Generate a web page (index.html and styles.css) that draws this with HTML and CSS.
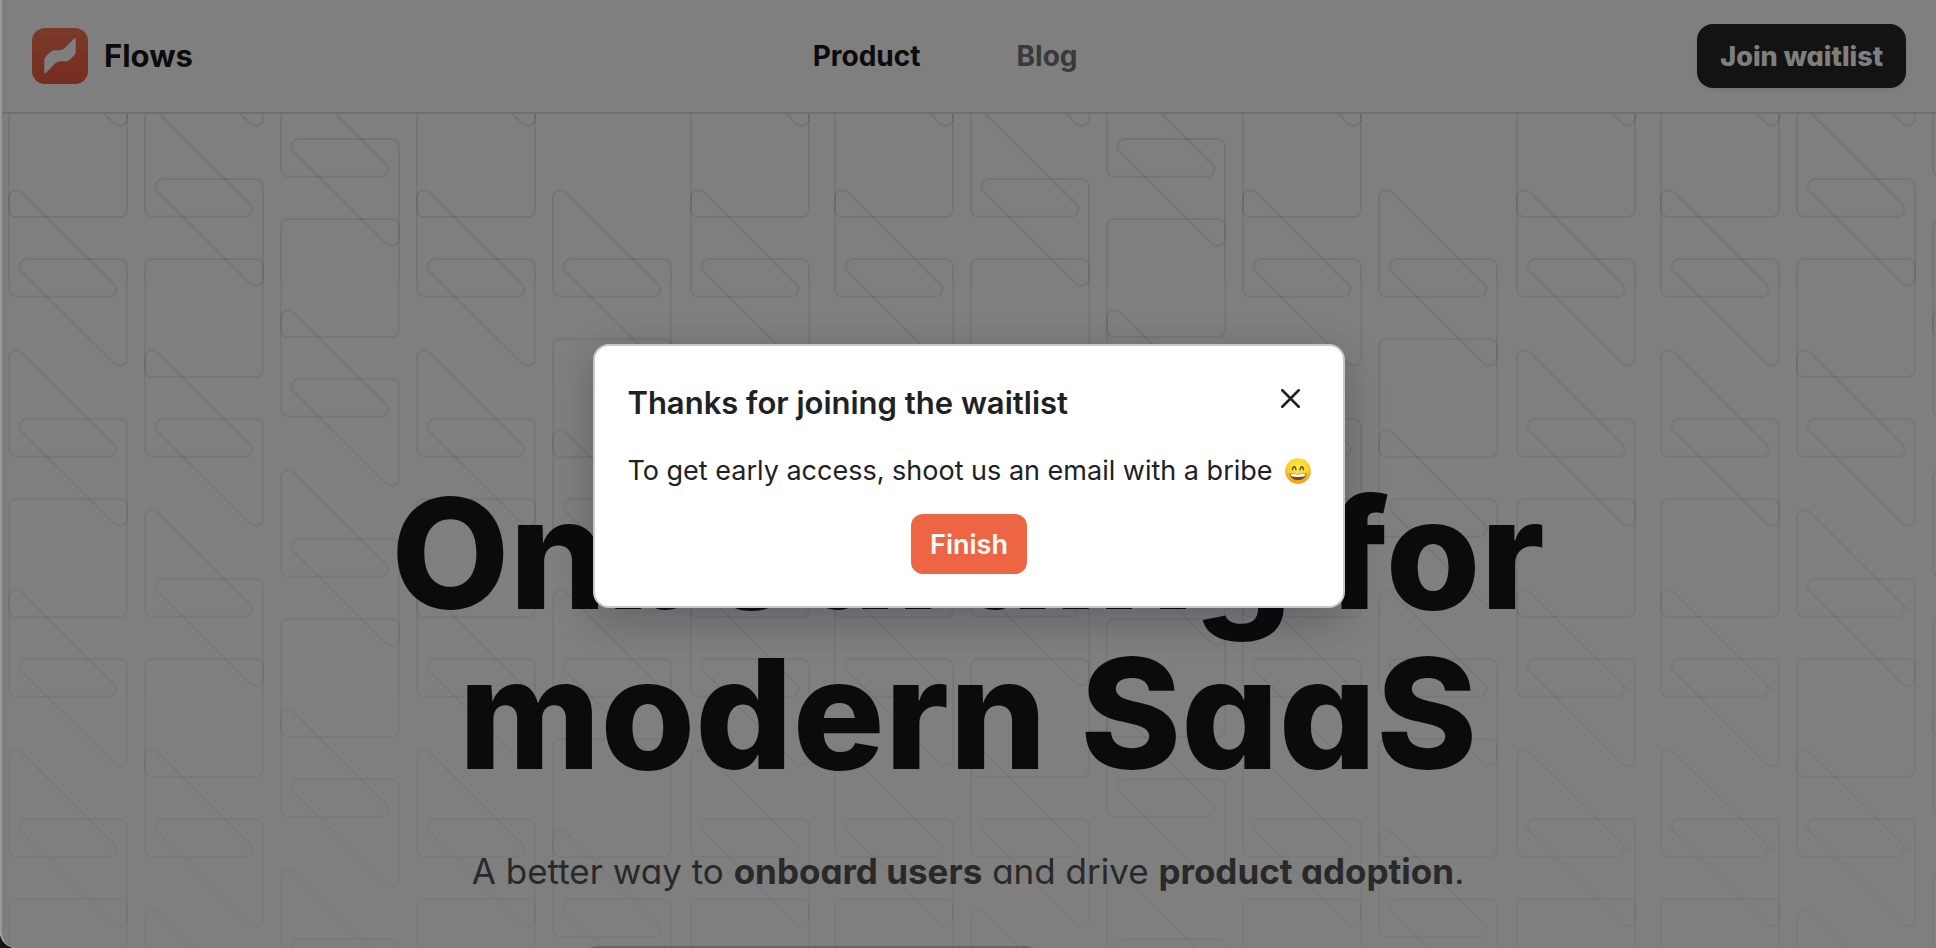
FILE: index.html
```html
<!DOCTYPE html>
<html lang="en">
<head>
<meta charset="utf-8">
<title>Flows</title>
<link rel="stylesheet" href="styles.css">
</head>
<body>
<div class="window">
  <header class="header">
    <a class="brand" href="#">
      <svg class="brand-logo" viewBox="0 0 56 56" aria-hidden="true">
        <defs><linearGradient id="logo-fill" x1="0" y1="0" x2="0" y2="1"><stop offset="0" stop-color="#f87455"/><stop offset="1" stop-color="#ea5a3c"/></linearGradient></defs>
        <rect width="56" height="56" rx="13" fill="url(#logo-fill)"/>
        <path fill="#fff" d="M12.3 44.6V31.5Q12.3 30 13.4 28.900L18 24.300Q20 22.300 23 22.300H28Q30.500 22.300 32.300 20.500L42.200 10.600Q43.700 9.300 43.700 11V24.200Q43.700 25.700 42.600 26.800L38 31.400Q36 33.300 33 33.300H28Q25.500 33.300 23.700 35.100L13.800 45.100Q12.300 46.500 12.300 44.600Z"/>
      </svg>
      <span class="brand-name">Flows</span>
    </a>
    <nav class="nav">
      <a class="nav-link nav-link-active" href="#">Product</a>
      <a class="nav-link" href="#">Blog</a>
    </nav>
    <button class="join" type="button">Join waitlist</button>
  </header>
  <main class="hero">
    <svg class="hero-pattern" aria-hidden="true">
      <defs>
        <path id="low" d="M0 7.500A7.500 7.500 0 0 1 12.800 2.200L105 94A7.500 7.500 0 0 1 99.700 106.800H7.500A7.500 7.500 0 0 1 0 99.300Z"/>
        <use id="high" href="#low" transform="translate(118 106.800) rotate(180)"/>
        <g id="unit">
          <rect width="118" height="118" rx="7"/>
          <use href="#low" y="91"/>
          <use href="#high" y="160"/>
          <use href="#low" y="251"/>
          <use href="#high" y="320"/>
        </g>
        <g id="column"><use href="#unit" y="-400"/><use href="#unit"/><use href="#unit" y="400"/><use href="#unit" y="800"/></g>
        <pattern id="tiles" y="-114" width="826" height="1200" patternUnits="userSpaceOnUse">
          <g fill="none" stroke="#000" stroke-opacity=".085" stroke-width="2">
            <use href="#column" x="9" y="99"/>
            <use href="#column" x="145" y="259"/>
            <use href="#column" x="281" y="219"/>
            <use href="#column" x="417" y="99"/>
            <use href="#low" x="553" y="190"/>
            <use href="#high" x="553" y="259"/>
            <use href="#unit" x="553" y="339"/>
            <use href="#unit" x="553" y="739"/>
            <use href="#column" x="691" y="99"/>
          </g>
        </pattern>
      </defs>
      <rect width="100%" height="100%" fill="url(#tiles)"/>
    </svg>
    <h1 class="hero-title">Onboarding for<br>modern SaaS</h1>
    <p class="hero-text">A better way to <strong>onboard users</strong> and drive <strong>product adoption</strong>.</p>
    <input class="hero-email" type="email" aria-label="Email">
  </main>
  <div class="overlay">
    <section class="modal" role="dialog" aria-modal="true" aria-labelledby="modal-title">
      <div class="modal-head">
        <h2 class="modal-title" id="modal-title">Thanks for joining the waitlist</h2>
        <button class="modal-close" type="button" aria-label="Close">
          <svg class="close-icon" viewBox="0 0 18 18" aria-hidden="true"><path d="M1.200 1.200L16.800 16.800M16.800 1.200L1.200 16.800" stroke="currentColor" stroke-width="2.400" stroke-linecap="round"/></svg>
        </button>
      </div>
      <p class="modal-text">To get early access, shoot us an email with a bribe
        <svg class="emoji" viewBox="0 0 26 26" role="img" aria-label="grinning face">
          <defs>
            <radialGradient id="face" cx=".5" cy=".35" r=".65"><stop offset="0" stop-color="#fff04a"/><stop offset=".6" stop-color="#fdd02f"/><stop offset="1" stop-color="#f09212"/></radialGradient>
          </defs>
          <circle cx="13" cy="13" r="12.800" fill="url(#face)"/>
          <path d="M7.500 11.800Q7.800 8.700 9.200 8.700T10.900 11.800M15.100 11.800Q15.400 8.700 16.800 8.700T18.500 11.800" fill="none" stroke="#6b4310" stroke-width="1.400" stroke-linecap="round"/>
          <path d="M4.500 15Q13 16.800 21.500 15Q20.800 22.200 13 22.200T4.500 15Z" fill="#7a4a12"/>
          <path d="M5.300 15.600Q13 17.200 20.700 15.600Q20.300 18.400 18.800 18.500Q13 19.400 7.200 18.500Q5.700 18.400 5.300 15.600Z" fill="#fff"/>
        </svg>
      </p>
      <button class="finish" type="button">Finish</button>
    </section>
  </div>
</div>
</body>
</html>
```
FILE: styles.css
```css
* { box-sizing: border-box; }

body {
  margin: 0;
  background: #15151a;
  font-family: Inter, "Liberation Sans", sans-serif;
  color: #171717;
}

.window {
  position: relative;
  display: flex;
  flex-direction: column;
  height: 100vh;
  overflow: hidden;
  border-bottom-left-radius: 16px;
  background: #fff;
  font-feature-settings: "cv11";
}

.header {
  display: flex;
  align-items: center;
  justify-content: space-between;
  padding: 24px 30px 24px 32px;
  border-bottom: 2px solid #dedede;
}

.brand {
  display: flex;
  align-items: center;
  gap: 16px;
  color: inherit;
  text-decoration: none;
}

.brand-logo { width: 56px; height: 56px; }

.brand-name {
  font-size: 31px;
  font-weight: 700;
  line-height: 36px;
}

.nav { display: flex; gap: 96px; }

.nav-link {
  color: #737373;
  font-size: 28px;
  font-weight: 700;
  line-height: 40px;
  text-decoration: none;
}

.nav-link-active { color: #171717; }

.join {
  height: 64px;
  padding: 0 23px;
  border: 0;
  border-radius: 16px;
  background: #262626;
  box-shadow: 0 2px 4px rgba(0, 0, 0, .08);
  color: #fff;
  font: inherit;
  font-size: 27px;
  font-weight: 800;
}

.hero {
  position: relative;
  display: flex;
  flex: 1;
  flex-direction: column;
  align-items: center;
  padding-top: 360px;
  text-align: center;
}

.hero-pattern {
  position: absolute;
  inset: 0;
  width: 100%;
  height: 100%;
  -webkit-mask-image: linear-gradient(#000, rgba(0, 0, 0, .4));
  mask-image: linear-gradient(#000, rgba(0, 0, 0, .4));
}

.hero-title {
  position: relative;
  margin: 0;
  font-size: 153px;
  font-weight: 800;
  line-height: 160px;
  white-space: nowrap;
}

.hero-text {
  position: relative;
  margin: 49px 0 0;
  color: #525252;
  font-size: 35px;
  line-height: 56px;
}

.hero-email {
  position: relative;
  flex-shrink: 0;
  align-self: flex-start;
  width: 460px;
  height: 80px;
  margin: 47px 0 0 30%;
  border: 2px solid #ccc;
  border-radius: 16px;
}

.overlay {
  position: absolute;
  inset: 0;
  display: flex;
  align-items: center;
  justify-content: center;
  padding-top: 4px;
  border-left: 2px solid #999;
  border-bottom-left-radius: 16px;
  background: rgba(0, 0, 0, .5);
  font-feature-settings: normal;
}

.modal {
  display: flex;
  flex-direction: column;
  align-items: center;
  padding: 32px;
  border: 2px solid #c8c8c8;
  border-radius: 16px;
  background: #fff;
  box-shadow: 0 12px 40px rgba(10, 10, 30, .24);
  color: #202124;
}

.modal-head {
  display: flex;
  align-self: stretch;
  justify-content: space-between;
}

.modal-title {
  margin: 3px 0 0;
  font-size: 31px;
  font-weight: 600;
  line-height: 44px;
}

.modal-close {
  display: flex;
  align-items: center;
  justify-content: center;
  width: 40px;
  height: 40px;
  padding: 0;
  border: 0;
  background: none;
  color: inherit;
}

.close-icon { width: 19px; height: 19px; }

.modal-text {
  display: flex;
  align-items: center;
  gap: 12px;
  margin: 24px 0 21px;
  font-size: 27px;
  line-height: 44px;
  white-space: nowrap;
}

.emoji { width: 26px; height: 26px; }

.finish {
  height: 60px;
  padding: 0 19px;
  border: 0;
  border-radius: 12px;
  background: #ee6543;
  color: #fff;
  font: inherit;
  font-size: 27px;
  font-weight: 600;
}
```
